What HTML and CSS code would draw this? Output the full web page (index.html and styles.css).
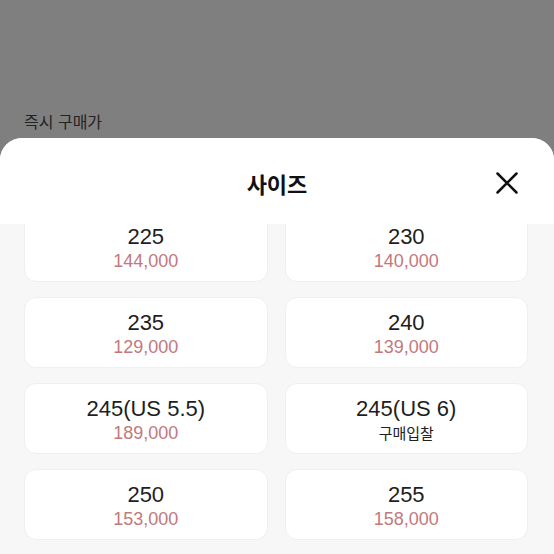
FILE: index.html
```html
<!DOCTYPE html>
<html lang="ko">
<head>
<meta charset="utf-8">
<link rel="stylesheet" href="styles.css">
</head>
<body>
<div class="backdrop">
  <div class="under-label">즉시 구매가</div>
</div>
<div class="sheet">
  <div class="sheet-header">
    <div class="title">사이즈</div>
    <button class="close" aria-label="닫기">
      <svg width="22" height="22" viewBox="0 0 22 22"><path d="M1.5 1.5 L20.5 20.5 M20.5 1.5 L1.5 20.5" stroke="#111" stroke-width="2.5" stroke-linecap="round" fill="none"/></svg>
    </button>
  </div>
  <div class="list">
    <div class="grid">
      <div class="card"><div class="size">225</div><div class="price">144,000</div></div>
      <div class="card"><div class="size">230</div><div class="price">140,000</div></div>
      <div class="card"><div class="size">235</div><div class="price">129,000</div></div>
      <div class="card"><div class="size">240</div><div class="price">139,000</div></div>
      <div class="card"><div class="size">245(US 5.5)</div><div class="price">189,000</div></div>
      <div class="card"><div class="size">245(US 6)</div><div class="bid">구매입찰</div></div>
      <div class="card"><div class="size">250</div><div class="price">153,000</div></div>
      <div class="card"><div class="size">255</div><div class="price">158,000</div></div>
    </div>
  </div>
</div>
</body>
</html>
```
FILE: styles.css
```css
html, body {
  margin: 0;
  padding: 0;
  height: 554px;
  overflow: hidden;
}
body {
  background: #7f7f7f;
  font-family: "Liberation Sans", "Noto Sans CJK KR", sans-serif;
  display: flex;
  flex-direction: column;
}
.backdrop {
  height: 138px;
  flex: none;
  display: flex;
  align-items: flex-end;
  padding: 0 24px 5px;
  box-sizing: border-box;
}
.under-label {
  font-family: "Noto Sans CJK KR", sans-serif;
  font-size: 16px;
  line-height: 22px;
  color: #232323;
  margin-bottom: 1px;
}
.sheet {
  flex: 1;
  background: #fff;
  border-radius: 22px 22px 0 0;
  display: flex;
  flex-direction: column;
  overflow: hidden;
}
.sheet-header {
  height: 86px;
  flex: none;
  position: relative;
  display: flex;
  align-items: center;
  justify-content: center;
  background: #fff;
  z-index: 1;
}
.title {
  font-family: "Noto Sans CJK KR", sans-serif;
  font-weight: 700;
  font-size: 22px;
  color: #111;
  margin-top: 4px;
}
.close {
  position: absolute;
  right: 36px;
  top: 34px;
  width: 22px;
  height: 22px;
  padding: 0;
  border: 0;
  background: none;
  display: flex;
}
.list {
  flex: 1;
  background: #f7f7f7;
  overflow: hidden;
  padding: 0 26px 0 24px;
}
.grid {
  display: grid;
  grid-template-columns: 1fr 1fr;
  column-gap: 17px;
  row-gap: 15px;
  margin-top: -13px;
}
.card {
  height: 71px;
  box-sizing: border-box;
  background: #fff;
  border: 1px solid #efefef;
  border-radius: 12px;
  display: flex;
  flex-direction: column;
  align-items: center;
  padding-top: 13px;
}
.size {
  font-size: 22px;
  line-height: 24px;
  color: #1e1e1e;
}
.price {
  font-size: 18px;
  line-height: 22px;
  color: #c2797c;
  margin-top: 1px;
}
.bid {
  font-family: "Noto Sans CJK KR", sans-serif;
  font-size: 15px;
  line-height: 22px;
  color: #222;
  margin-top: 1px;
}
```
